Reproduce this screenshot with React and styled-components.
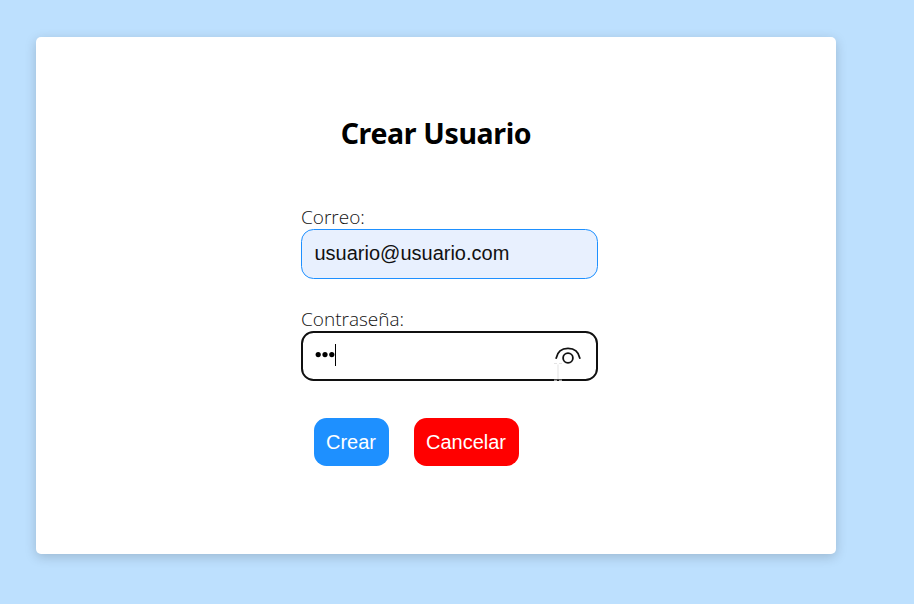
import React from "react";
import styled, { createGlobalStyle } from "styled-components";

const GlobalStyle = createGlobalStyle`
  * { box-sizing: border-box; }
  html, body { margin: 0; height: 100%; overflow: hidden; }
  body { background: #bde0fe; }
`;

const Page = styled.main`
  width: 914px;
  height: 604px;
  padding: 36.5px 36px;
  background: #bde0fe;
`;

const Card = styled.section`
  display: flex;
  flex-direction: column;
  align-items: center;
  width: 800px;
  height: 517px;
  padding-top: 76px;
  background: #fff;
  border-radius: 5px;
  box-shadow: 0 3px 12px rgba(0, 0, 0, 0.18);
`;

const Title = styled.h1`
  margin: 0;
  font: 700 28.5px/40px "Noto Sans", sans-serif;
  letter-spacing: -0.35px;
  color: #000;
  white-space: nowrap;
`;

const Form = styled.form`
  width: 297px;
  margin: 52.5px 0 0 27px;
`;

const Field = styled.div`
  height: 102px;
`;

const Label = styled.label`
  display: block;
  height: 23.5px;
  font: 350 19px/24px "Open Sans", sans-serif;
  color: #111;
`;

const InputBox = styled.div`
  position: relative;
  display: flex;
  align-items: center;
  width: 297px;
  height: 50px;
  padding: 0 ${(p) => (p.$focused ? "15px 1px 12px" : "12.5px 1px")};
  border: ${(p) => (p.$focused ? "2px solid #101010" : "1px solid #1e90ff")};
  border-radius: 12.5px;
  background: ${(p) => (p.$focused ? "#fff" : "#e8f0fe")};
  font: 20px/24px "Liberation Sans", Arial, sans-serif;
  color: #111;
`;

const Dots = styled.svg`
  width: 20px;
  height: 8px;
`;

const Caret = styled.span`
  width: 1px;
  height: 22px;
  background: #000;
`;

const EyeIcon = styled.svg`
  width: 26px;
  height: 18px;
  margin: 2px 0 0 auto;
`;

const Pointer = styled.svg`
  position: absolute;
  left: 251px;
  top: 30px;
  width: 8px;
  height: 18px;
`;

const Actions = styled.div`
  display: flex;
  gap: 25px;
  padding: 8.5px 0 0 13px;
`;

const Button = styled.button`
  width: ${(p) => p.$width};
  height: 48px;
  padding: 0 1px 0 0;
  border: 0;
  border-radius: 12.5px;
  background: ${(p) => p.$color};
  color: #fff;
  font: 20px/24px "Liberation Sans", Arial, sans-serif;
`;

export default function App() {
  return (
    <>
      <GlobalStyle />
      <Page>
        <Card>
          <Title>Crear Usuario</Title>
          <Form>
            <Field>
              <Label>Correo:</Label>
              <InputBox>usuario@usuario.com</InputBox>
            </Field>
            <Field>
              <Label>Contraseña:</Label>
              <InputBox $focused>
                <Dots viewBox="0 0 20 8" fill="#000">
                  <circle cx="3.2" cy="3.6" r="2.6" />
                  <circle cx="10" cy="3.6" r="2.6" />
                  <circle cx="16.8" cy="3.6" r="2.6" />
                </Dots>
                <Caret />
                <EyeIcon viewBox="0 0 26 18" fill="none" stroke="#111" strokeWidth="1.8">
                  <path d="M1.2 11.2C2.4 4.8 7.1 1.4 13 1.4s10.6 3.4 11.8 9.8" strokeLinecap="round" />
                  <circle cx="13" cy="11" r="4.9" />
                </EyeIcon>
                <Pointer viewBox="0 0 8 18" fill="none" stroke="#e3e3e3">
                  <path d="M0 .5h3M5 .5h3M4 1.5v15M0 17.2h3M5 17.2h3" />
                </Pointer>
              </InputBox>
            </Field>
            <Actions>
              <Button type="button" $width="75px" $color="#1e90ff">Crear</Button>
              <Button type="button" $width="105px" $color="#ff0000">Cancelar</Button>
            </Actions>
          </Form>
        </Card>
      </Page>
    </>
  );
}
